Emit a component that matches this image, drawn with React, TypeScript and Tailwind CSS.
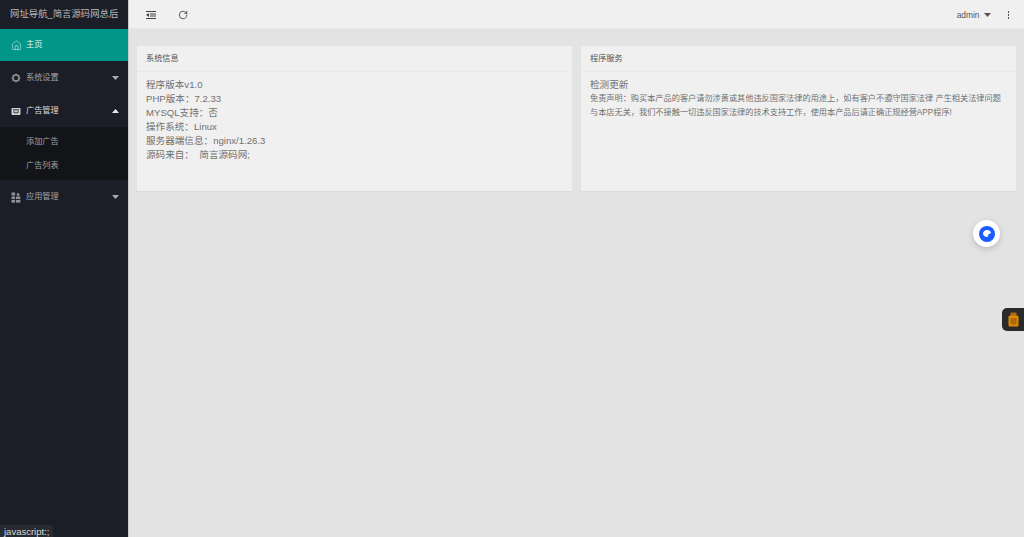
import { Home, RotateCw } from "lucide-react";
import type { ReactNode } from "react";

const FONT = "font-['Liberation_Sans','Noto_Sans_CJK_SC',sans-serif]";

function Caret({ up }: { up?: boolean }) {
  return (
    <svg width="7" height="4" viewBox="0 0 7 4" className={up ? "rotate-180" : ""}>
      <path d="M0 0h7L3.5 4z" fill={up ? "#e8e8e8" : "#a9abb0"} />
    </svg>
  );
}

function GearIcon() {
  return (
    <svg width="10" height="10" viewBox="0 0 10 10" className="shrink-0">
      <circle cx="5" cy="5" r="3" fill="none" stroke="#8f9196" strokeWidth="1.6" />
      <path
        d="M5 .5v1.4M5 8.1v1.4M.5 5h1.4M8.1 5h1.4M1.8 1.8l1 1M7.2 7.2l1 1M8.2 1.8l-1 1M2.8 7.2l-1 1"
        stroke="#8f9196"
        strokeWidth="1.2"
      />
    </svg>
  );
}

function InboxIcon() {
  return (
    <svg width="10" height="9" viewBox="0 0 10 9" className="shrink-0">
      <rect x=".5" y="1" width="9" height="7" rx="1" fill="#d0d1d3" />
      <path d="M2 5h1.6l.6 1h1.6l.6-1H8" fill="none" stroke="#1c1e27" strokeWidth=".9" />
      <rect x="2" y="2.4" width="6" height="1" fill="#1c1e27" />
    </svg>
  );
}

function AppsIcon() {
  return (
    <svg width="10" height="11" viewBox="0 0 10 11" className="shrink-0" fill="#8f9196">
      <rect x=".5" y=".5" width="3.6" height="3" />
      <rect x=".5" y="4.5" width="3.6" height="2.6" />
      <rect x=".5" y="8" width="3.6" height="2.6" />
      <rect x="5" y="8" width="4.4" height="2.6" />
      <rect x="5" y="4.5" width="4.4" height="2.6" />
      <path d="M6.2.8l2.6 1.2-1.2 2.2-2-1z" />
    </svg>
  );
}

function NavItem({
  icon,
  label,
  caret,
  open,
}: {
  icon: ReactNode;
  label: string;
  caret?: boolean;
  open?: boolean;
}) {
  const tone = open ? "text-[#d8d9db]" : "text-[#a0a2a6]";
  return (
    <div className={`flex items-center h-[33px] pt-[1px] pl-[11px] pr-[9px] text-[8.19px] ${tone}`}>
      <span className="w-[15px] flex">{icon}</span>
      <span className="flex-1">{label}</span>
      {caret ? <Caret up={open} /> : null}
    </div>
  );
}

function Card({ title, children }: { title: string; children: ReactNode }) {
  return (
    <div className="h-[145px] bg-[#f0f0f0] rounded-[1px] shadow-[0_1px_1px_rgba(0,0,0,0.04)]">
      <div className="h-[25.5px] flex items-center pt-[1px] px-[9px] text-[8.19px] text-[#555] border-b border-[#e9e9e9]">
        {title}
      </div>
      <div className="px-[9px] pt-[6px]">{children}</div>
    </div>
  );
}

const INFO = [
  "程序版本v1.0",
  "PHP版本：7.2.33",
  "MYSQL支持：否",
  "操作系统：Linux",
  "服务器端信息：nginx/1.26.3",
  "源码来自：  简言源码网;",
];

export default function App() {
  return (
    <div className={`relative flex h-[537px] w-[1024px] overflow-hidden bg-[#e3e3e3] ${FONT}`}>
      <aside className="w-[128px] shrink-0 bg-[#1c1e27] border-r border-[#c9c9c9] box-content">
        <div className="h-[29px] flex items-center pl-[10px] whitespace-nowrap text-[9.4px] text-[#b9babd]">
          网址导航_简言源码网总后
        </div>
        <div className="h-[32px] flex items-center pt-[1px] pl-[11px] text-[8.19px] text-[#e9f3f2] bg-[#009688]">
          <span className="w-[15px] flex">
            <Home size={11} strokeWidth={1.2} />
          </span>
          主页
        </div>
        <NavItem icon={<GearIcon />} label="系统设置" caret />
        <NavItem icon={<InboxIcon />} label="广告管理" caret open />
        <div className="h-[53px] bg-[#131418] pt-[3px] text-[8.19px] text-[#a0a2a6]">
          <div className="h-[24px] flex items-center pl-[26px]">添加广告</div>
          <div className="h-[24px] flex items-center pl-[26px]">广告列表</div>
        </div>
        <NavItem icon={<AppsIcon />} label="应用管理" caret />
      </aside>

      <div className="flex-1 min-w-0">
        <header className="h-[29px] pt-[2px] bg-[#f0f0f0] flex items-center text-[#444] border-b border-[#e8e8e8]">
          <svg width="10" height="8" viewBox="0 0 10 8" className="ml-[17px]">
            <path d="M0 .5h10M4 3h6M4 5h6M0 7.5h10" stroke="#444" strokeWidth="1" />
            <path d="M3 2v4L0 4z" fill="#444" />
          </svg>
          <RotateCw size={10} strokeWidth={2} className="ml-[22px]" />
          <span className="ml-auto text-[8.4px] text-[#555]">admin</span>
          <svg width="7" height="4" viewBox="0 0 7 4" className="ml-[4px]">
            <path d="M0 0h7L3.5 4z" fill="#555" />
          </svg>
          <span className="ml-[17px] mr-[15px] flex flex-col gap-[1.5px]">
            <span className="w-[1.5px] h-[1.5px] bg-[#555]" />
            <span className="w-[1.5px] h-[1.5px] bg-[#555]" />
            <span className="w-[1.5px] h-[1.5px] bg-[#555]" />
          </span>
        </header>

        <main className="grid grid-cols-2 gap-[9px] pl-[8px] pr-[8px] pt-[17px]">
          <Card title="系统信息">
            {INFO.map((line) => (
              <div key={line} className="text-[9.6px] leading-[14.08px] text-[#707070] whitespace-pre">
                {line}
              </div>
            ))}
          </Card>
          <Card title="程序服务">
            <div className="text-[9.6px] leading-[14.08px] text-[#707070]">检测更新</div>
            <p className="text-[8.19px] leading-[14.4px] text-[#707070]">
              免责声明：购买本产品的客户请勿涉黄或其他违反国家法律的用途上，如有客户不遵守国家法律 产生相关法律问题与本店无关，我们不接触一切违反国家法律的技术支持工作，使用本产品后请正确正规经营APP程序!
            </p>
          </Card>
        </main>
      </div>

      <div className="absolute left-[973px] top-[220px] w-[27px] h-[27px] rounded-full bg-white shadow-[0_2px_6px_rgba(0,0,0,0.18)] flex items-center justify-center">
        <svg width="16" height="16" viewBox="0 0 16 16">
          <circle cx="8" cy="8" r="8" fill="#1a5cff" />
          <path d="M4 8.2a4 4 0 0 1 4-4.2 4 4 0 0 1 4 3.2L9.6 8l-.6 2.6A4 4 0 0 1 4 8.2z" fill="#fff" />
        </svg>
      </div>

      <div className="absolute left-[1002px] top-[308px] w-[22px] h-[23px] rounded-l-[5px] bg-[#2a2a2a] flex items-center justify-center">
        <svg width="11" height="15" viewBox="0 0 11 15">
          <rect x="2.5" y="0.5" width="6" height="4" rx=".5" fill="#a86a0c" />
          <rect x="0.5" y="3.5" width="10" height="11" rx="1.5" fill="#e08a00" />
          <rect x="2.5" y="6" width="6" height="6.5" fill="#a86a0c" />
        </svg>
      </div>

      <div className="absolute left-0 bottom-0 h-[12px] pt-[2px] px-[4px] flex items-center rounded-tr-[2px] bg-[#282c30] text-[9.5px] text-[#d8d8d8]">
        javascript:;
      </div>
    </div>
  );
}
